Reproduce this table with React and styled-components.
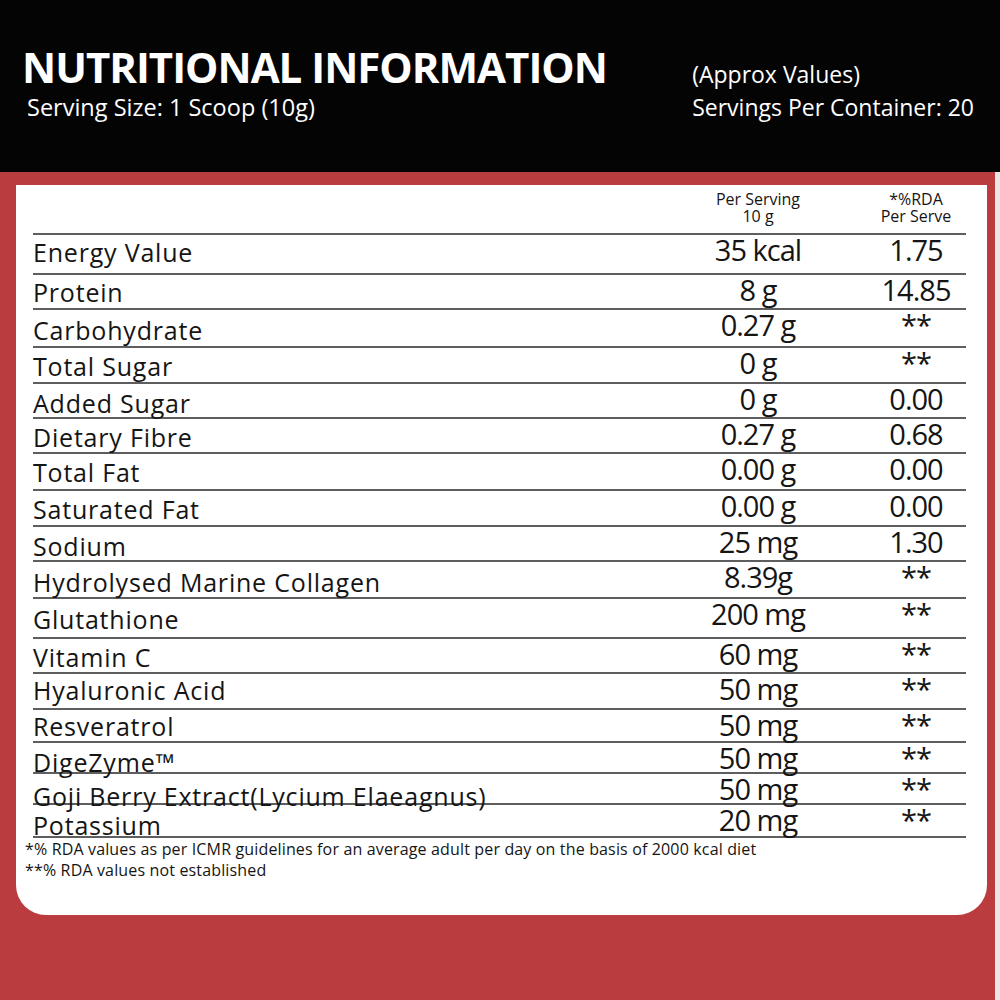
import React from "react";
import styled, { createGlobalStyle } from "styled-components";

const Global = createGlobalStyle`
  html, body { margin: 0; padding: 0; overflow: hidden; }
  body { font-family: "Open Sans", "Liberation Sans", sans-serif; background: #bb3c3e; }
`;

const Page = styled.div`
  width: 1000px;
  height: 1000px;
  display: flex;
  flex-direction: column;
  background: #bb3c3e;
`;

const Header = styled.header`
  height: 172px;
  box-sizing: border-box;
  background: #040404;
  color: #fff;
  padding: 46px 26px 0 22px;
  display: grid;
  grid-template-columns: 1fr auto;
  align-content: start;
  row-gap: 5px;
  align-items: last baseline;
`;

const Title = styled.h1`
  margin: 0;
  font-family: "Open Sans", sans-serif;
  font-weight: 700;
  font-size: 42px;
  line-height: 42px;
  letter-spacing: -1px;
`;

const Note = styled.div`
  font-size: ${(p) => p.size}px;
  line-height: 28px;
  font-weight: 400;
  padding-left: ${(p) => p.indent || 0}px;
`;

const RedArea = styled.main`
  flex: 1;
  border-right: 5px solid #ece4e4;
  padding: 13px 8px 0 16px;
`;

const Card = styled.section`
  background: #fff;
  height: 730px;
  box-sizing: border-box;
  border-radius: 0 0 30px 30px;
  padding: 0 21px 0 17px;
  color: #151515;
`;

const Row = styled.div`
  display: grid;
  grid-template-columns: 1fr 140px 100px;
  column-gap: 38px;
  height: ${(p) => p.h}px;
  box-sizing: border-box;
  border-bottom: 2px solid #5e5e5e;
`;

const HeadCell = styled.div`
  grid-column: ${(p) => p.col};
  text-align: center;
  font-size: 16px;
  line-height: 17px;
  padding-top: 6px;
`;

const Label = styled.div`
  align-self: end;
  font-size: 25px;
  line-height: 25px;
  letter-spacing: 0.8px;
  white-space: nowrap;
  padding-bottom: ${(p) => p.pb}px;
`;

const Value = styled.div`
  align-self: end;
  text-align: center;
  font-size: 29px;
  line-height: 29px;
  letter-spacing: -1px;
  white-space: nowrap;
  padding-bottom: ${(p) => p.pb}px;
`;

const Footnotes = styled.div`
  margin: 1px 0 0 -8px;
  font-size: 16px;
  line-height: 21px;
  letter-spacing: 0.15px;
  color: #151515;
`;

const rows = [
  ["Energy Value", "35 kcal", "1.75", 40, 12, 13],
  ["Protein", "8 g", "14.85", 35, 9, 10],
  ["Carbohydrate", "0.27 g", "**", 38, 9, 13],
  ["Total Sugar", "0 g", "**", 36, 10, 12],
  ["Added Sugar", "0 g", "0.00", 35, 9, 12],
  ["Dietary Fibre", "0.27 g", "0.68", 35, 9, 11],
  ["Total Fat", "0.00 g", "0.00", 37, 8, 10],
  ["Saturated Fat", "0.00 g", "0.00", 36, 8, 10],
  ["Sodium", "25 mg", "1.30", 35, 5, 8],
  ["Hydrolysed Marine Collagen", "8.39g", "**", 37, 7, 11],
  ["Glutathione", "200 mg", "**", 40, 10, 14],
  ["Vitamin C", "60 mg", "**", 35, 9, 11],
  ["Hyaluronic Acid", "50 mg", "**", 36, 11, 11],
  ["Resveratrol", "50 mg", "**", 33, 8, 8],
  ["DigeZyme™", "50 mg", "**", 31, 6, 9],
  ["Goji Berry Extract(Lycium Elaeagnus)", "50 mg", "**", 31, 4, 10],
  ["Potassium", "20 mg", "**", 33, 4, 8],
];

export default function App() {
  return (
    <Page>
      <Global />
      <Header>
        <Title>NUTRITIONAL INFORMATION</Title>
        <Note size={23}>(Approx Values)</Note>
        <Note size={23.5} indent={5}>Serving Size: 1 Scoop (10g)</Note>
        <Note size={23}>Servings Per Container: 20</Note>
      </Header>
      <RedArea>
        <Card>
          <Row h={50}>
            <HeadCell col={2}>
              Per Serving
              <br />
              10 g
            </HeadCell>
            <HeadCell col={3}>
              *%RDA
              <br />
              Per Serve
            </HeadCell>
          </Row>
          {rows.map(([name, val, rda, h, lb, vb]) => (
            <Row key={name} h={h}>
              <Label pb={Math.max(0, lb - 2.8)}>{name}</Label>
              <Value pb={Math.max(0, vb - 3.2)}>{val}</Value>
              <Value pb={Math.max(0, vb - 3.2)}>{rda}</Value>
            </Row>
          ))}
          <Footnotes>
            <div>*% RDA values as per ICMR guidelines for an average adult per day on the basis of 2000 kcal diet</div>
            <div>**% RDA values not established</div>
          </Footnotes>
        </Card>
      </RedArea>
    </Page>
  );
}
